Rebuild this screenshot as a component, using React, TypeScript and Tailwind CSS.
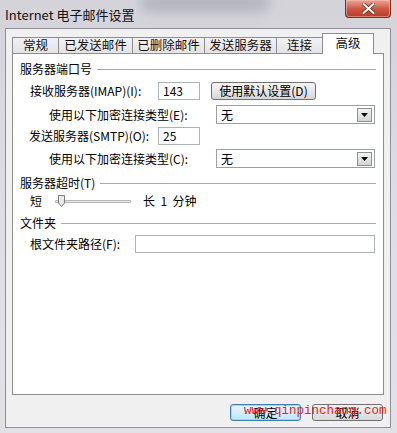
import React from "react";

const FONT = { fontFamily: '"Noto Sans CJK SC", "Noto Sans", sans-serif' };

function Header({ text }: { text: string }) {
  return (
    <div className="flex items-center h-[14px] pl-[7px] pr-[7px]">
      <span className="text-[12px] leading-[14px] text-black whitespace-nowrap">{text}</span>
      <div className="flex-1 ml-[5px] h-px bg-[#a9a9a9]" />
    </div>
  );
}

function Select({ value }: { value: string }) {
  return (
    <div className="w-[159px] h-[19px] border border-[#9a9ea6] bg-white flex items-center pl-[4px] pr-[2px]">
      <span className="flex-1 text-[12px] leading-[14px]">{value}</span>
      <div className="w-[15px] h-[14px] border border-[#8e8f8f] bg-gradient-to-b from-[#f2f2f2] to-[#d4d4d4] flex items-center justify-center">
        <svg width="7" height="4" viewBox="0 0 7 4">
          <polygon points="0,0 7,0 3.5,4" fill="#000" />
        </svg>
      </div>
    </div>
  );
}

function TextBox({ value, w }: { value: string; w: string }) {
  return (
    <div className={`${w} h-[18px] border border-[#abb2bb] bg-white flex items-center pl-[4px] text-[12px] leading-[14px]`}>
      {value}
    </div>
  );
}

export default function App() {
  const tabs = [
    { t: "常规", w: "w-[47px]" },
    { t: "已发送邮件", w: "w-[75px]" },
    { t: "已删除邮件", w: "w-[73px]" },
    { t: "发送服务器", w: "w-[73px]" },
    { t: "连接", w: "w-[47px]" },
  ];
  return (
    <div
      className="relative w-[397px] h-[433px] flex flex-col bg-gradient-to-b from-[#d3d3d9] via-[#dedee3] to-[#e2e1e6] overflow-hidden"
      style={FONT}
    >
      {/* blurred glass highlight */}
      <div className="absolute left-[140px] top-[-6px] w-[130px] h-[18px] rounded-full bg-[#a9a8b2] blur-[6px] opacity-70" />
      {/* Title bar */}
      <div className="relative h-[28px] flex items-center pl-[5px] shrink-0">
        <span className="text-[13px] text-[#111] leading-none">Internet 电子邮件设置</span>
        <div className="absolute left-[345px] top-0 w-[46px] h-[18px] rounded-b-[4px] border border-t-0 border-[#7d2a20] bg-gradient-to-b from-[#e9a595] via-[#cf5a44] to-[#b93a25] flex items-center justify-center shadow-[inset_0_0_0_1px_rgba(255,200,190,0.5)]">
          <svg width="13" height="11" viewBox="0 0 13 11">
            <path d="M1.5 1 L11.5 10 M11.5 1 L1.5 10" stroke="#5a1a12" strokeWidth="3.6" strokeLinecap="round" />
            <path d="M1.5 1 L11.5 10 M11.5 1 L1.5 10" stroke="#ffffff" strokeWidth="2.2" strokeLinecap="round" />
          </svg>
        </div>
      </div>
      {/* Client area */}
      <div className="relative ml-[5px] mr-[6px] mb-[5px] flex-1 flex flex-col bg-[#f0f0f0] border-l border-t border-r border-b border-[#8f8f99]">
        {/* Tabs */}
        <div className="flex items-end h-[24px] pl-[6px] pt-[4px] relative z-10">
          {tabs.map((tab, i) => (
            <div
              key={tab.t}
              className={`${tab.w} h-[16px] ${i > 0 ? "-ml-px" : ""} border border-b-0 border-[#8c8e94] bg-gradient-to-b from-[#f2f2f2] to-[#e3e3e3] flex items-center justify-center text-[12.5px] leading-none text-[#111]`}
            >
              {tab.t}
            </div>
          ))}
          <div className="w-[52px] h-[21px] -ml-[1px] -mb-px border border-b-0 border-[#8c8e94] bg-white flex items-start justify-center pt-[2px] text-[12.5px] leading-[14px] text-[#111]">
            高级
          </div>
        </div>
        {/* Panel */}
        <div className="ml-[6px] w-[372px] h-[342px] border border-[#8c8e94] bg-white flex flex-col text-[12px] leading-[14px] text-black">
          <div className="mt-[8px]">
            <Header text="服务器端口号" />
          </div>
          <div className="mt-[6px] flex items-center pl-[17px]">
            <span className="w-[128px] whitespace-nowrap">接收服务器(IMAP)(I):</span>
            <TextBox value="143" w="w-[42px]" />
            <div className="ml-[11px] w-[105px] h-[18px] rounded-[3px] border border-[#707070] bg-gradient-to-b from-[#f4f4f4] via-[#e8e8e8] to-[#d6d6d6] flex items-center justify-center whitespace-nowrap">
              使用默认设置(D)
            </div>
          </div>
          <div className="mt-[5px] flex items-center pl-[36px]">
            <span className="w-[167px] whitespace-nowrap">使用以下加密连接类型(E):</span>
            <Select value="无" />
          </div>
          <div className="mt-[3px] flex items-center pl-[16px]">
            <span className="w-[129px] whitespace-nowrap">发送服务器(SMTP)(O):</span>
            <TextBox value="25" w="w-[42px]" />
          </div>
          <div className="mt-[4px] flex items-center pl-[36px]">
            <span className="w-[167px] whitespace-nowrap">使用以下加密连接类型(C):</span>
            <Select value="无" />
          </div>
          <div className="mt-[8px]">
            <Header text="服务器超时(T)" />
          </div>
          <div className="mt-[4px] h-[14px] flex items-center pl-[17px]">
            <span className="w-[25px]">短</span>
            <div className="relative w-[76px] h-[14px] flex items-center">
              <div className="w-full h-[3px] border border-[#b5b5b5] bg-[#e7e7e7] rounded-[1px]" />
              <div className="absolute left-[3px] top-[1px] w-[7px] h-[12px]">
                <svg width="7" height="12" viewBox="0 0 7 12">
                  <path d="M0.5 0.5 H6.5 V8 L3.5 11.5 L0.5 8 Z" fill="#eaeaea" stroke="#7a7a7a" strokeWidth="1" />
                </svg>
              </div>
            </div>
            <span className="ml-[12px] whitespace-pre">长  1  分钟</span>
          </div>
          <div className="mt-[8px]">
            <Header text="文件夹" />
          </div>
          <div className="mt-[5px] flex items-center pl-[17px]">
            <span className="w-[105px] whitespace-nowrap">根文件夹路径(F):</span>
            <TextBox value="" w="w-[240px]" />
          </div>
        </div>
        {/* Buttons */}
        <div className="mt-[9px] flex pl-[224px]">
          <div className="w-[71px] h-[17px] rounded-[3px] border border-[#3c7fb1] bg-gradient-to-b from-[#eaf6fd] to-[#bee6fd] shadow-[inset_0_0_0_1px_#9fd5f7] flex items-center justify-center text-[12px]">
            确定
          </div>
          <div className="ml-[11px] w-[71px] h-[17px] rounded-[3px] border border-[#707070] bg-gradient-to-b from-[#f2f2f2] to-[#d8d8d8] flex items-center justify-center text-[12px]">
            取消
          </div>
        </div>
        <div
          className="absolute left-[238px] top-[375px] text-[12.5px] leading-[14px] text-[#e8231f] whitespace-nowrap"
          style={{ fontFamily: '"Liberation Mono", monospace' }}
        >
          www.qinpinchang.com
        </div>
      </div>
    </div>
  );
}
